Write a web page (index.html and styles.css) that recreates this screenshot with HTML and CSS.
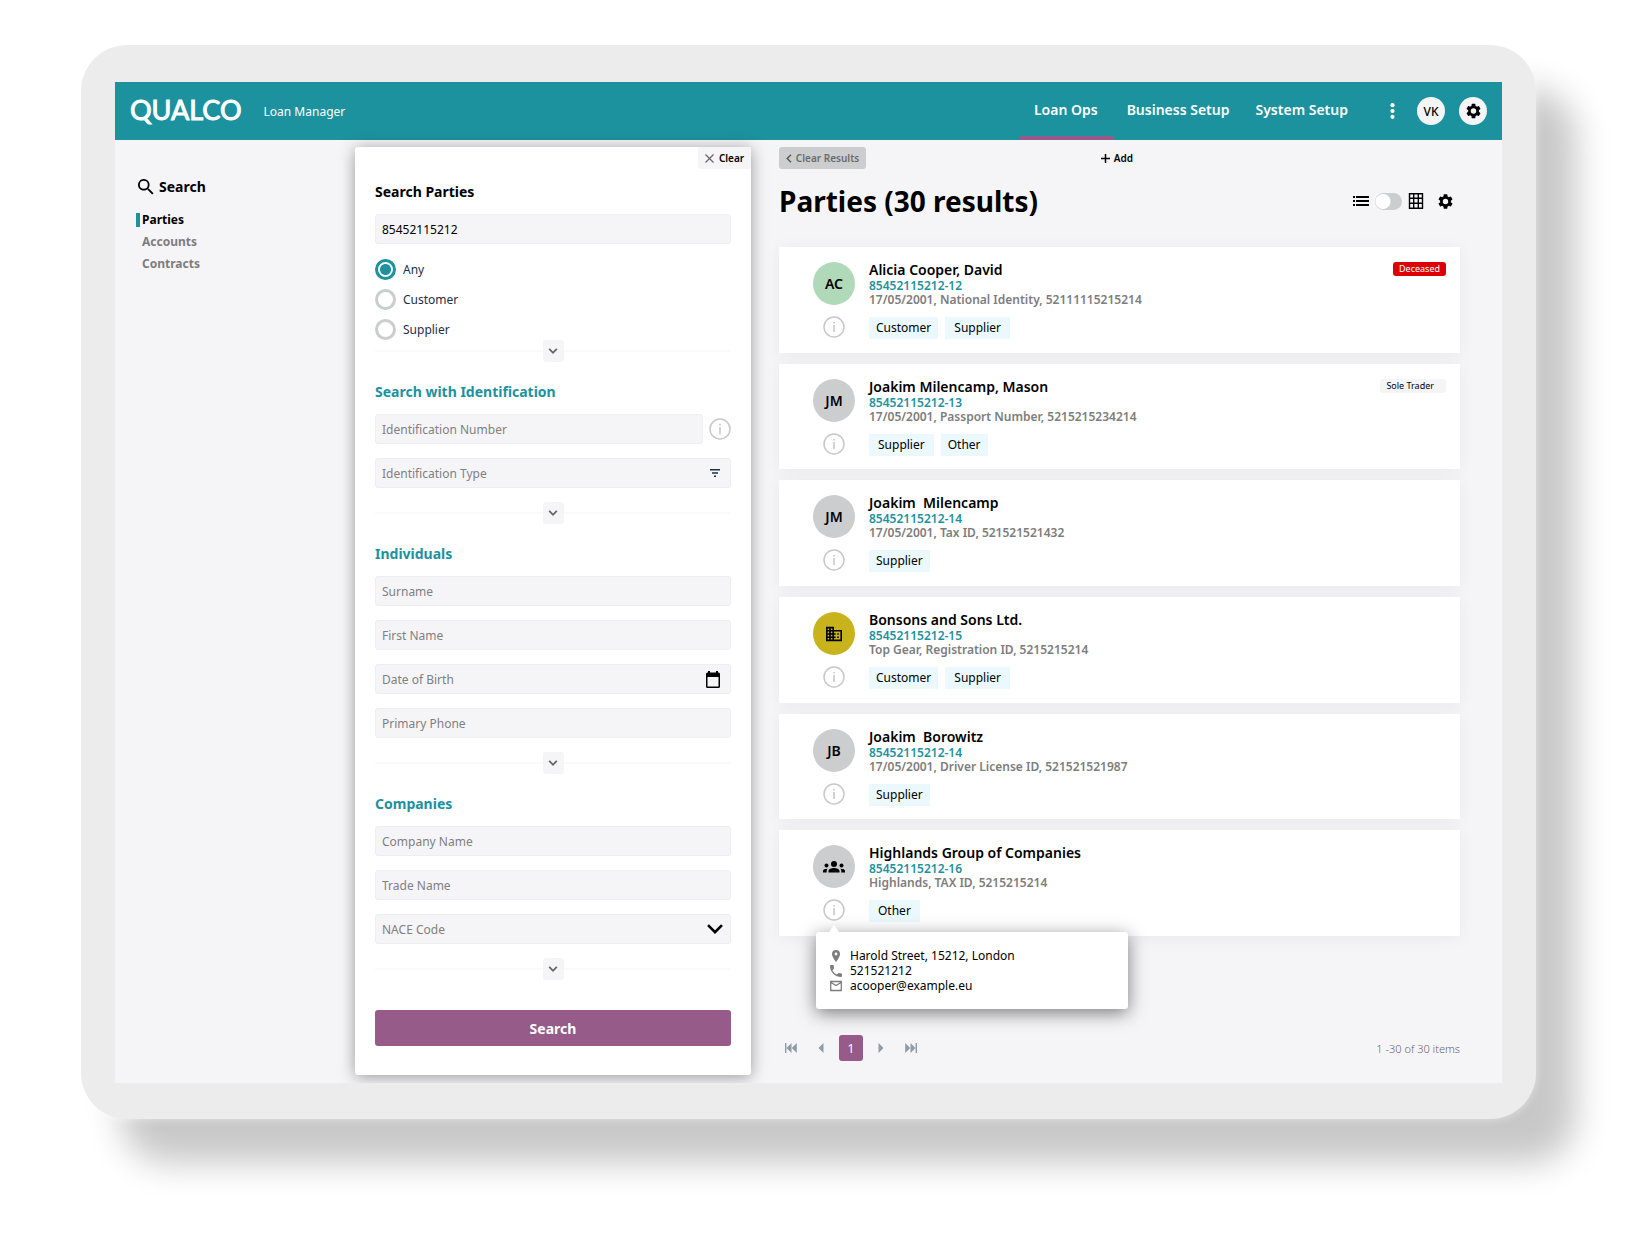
FILE: index.html
```html
<!DOCTYPE html>
<html lang="en">
  <head>
    <meta charset="UTF-8" />
    <meta name="viewport" content="width=device-width, initial-scale=1.0" />
    <title>Loan Manager - Parties</title>
    <link rel="stylesheet" href="styles.css">
  </head>
  <body>
    <!-- shared icons -->
    <svg class="sprite" aria-hidden="true">
      <symbol id="i-gear" viewBox="2 2 20 20"><path d="M19.14 12.94c.04-.3.06-.61.06-.94s-.02-.64-.07-.94l2.03-1.58a.49.49 0 0 0 .12-.61l-1.92-3.32a.49.49 0 0 0-.59-.22l-2.39.96a7 7 0 0 0-1.62-.94l-.36-2.54a.48.48 0 0 0-.48-.41h-3.84a.48.48 0 0 0-.47.41l-.36 2.54c-.59.24-1.13.57-1.62.94l-2.39-.96a.48.48 0 0 0-.59.22L2.74 8.87a.48.48 0 0 0 .12.61l2.03 1.58c-.05.3-.09.63-.09.94s.02.64.07.94l-2.03 1.58a.49.49 0 0 0-.12.61l1.92 3.32c.12.22.37.29.59.22l2.39-.96c.5.38 1.03.7 1.62.94l.36 2.54c.05.24.24.41.48.41h3.84c.24 0 .44-.17.47-.41l.36-2.54a7 7 0 0 0 1.62-.94l2.39.96c.22.08.47 0 .59-.22l1.92-3.32a.48.48 0 0 0-.12-.61zM12 15.6a3.6 3.6 0 1 1 0-7.2 3.6 3.6 0 0 1 0 7.2z"/></symbol>
      <symbol id="i-info" viewBox="0 0 22 22"><circle cx="11" cy="11" r="10" fill="none" stroke="currentColor" stroke-width="1.5"/><path d="M10.2 9h1.6v7h-1.6zM10.2 6h1.6v1.6h-1.6z"/></symbol>
      <symbol id="i-down" viewBox="0 0 10 8"><path d="M1.2 1.8 5 5.8l3.8-4" fill="none" stroke="currentColor" stroke-width="1.8"/></symbol>
    </svg>

    <div class="device">
      <div class="screen">
        <header class="topbar">
          <span class="logo">QUALCO</span>
          <span class="product">Loan Manager</span>
          <nav class="main-nav">
            <a href="#" class="active">Loan Ops</a>
            <a href="#">Business Setup</a>
            <a href="#">System Setup</a>
          </nav>
          <div class="top-actions">
            <button class="more" aria-label="More">
              <svg width="5" height="16" viewBox="0 0 5 16"><circle cx="2.500" cy="2.200" r="2.100"/><circle cx="2.500" cy="8" r="2.100"/><circle cx="2.500" cy="13.800" r="2.100"/></svg>
            </button>
            <button class="round">VK</button>
            <button class="round" aria-label="Settings"><svg width="15" height="16"><use href="#i-gear"/></svg></button>
          </div>
        </header>

        <div class="content">
          <aside class="sidebar">
            <h2>
              <svg width="16" height="16" viewBox="3 3 18 18"><path d="M15.500 14h-.79l-.28-.27A6.500 6.500 0 1 0 13.730 14.430l.27.28v.79l5 4.990L20.490 19l-4.990-5zm-6 0a4.500 4.500 0 1 1 0-9 4.500 4.500 0 0 1 0 9z"/></svg>
              Search
            </h2>
            <ul>
              <li><a href="#" class="active">Parties</a></li>
              <li><a href="#">Accounts</a></li>
              <li><a href="#">Contracts</a></li>
            </ul>
          </aside>

          <form class="panel">
            <button type="reset" class="clear">
              <svg width="9" height="9" viewBox="0 0 9 9"><path d="M.5.5l8 8M8.500.5l-8 8" fill="none" stroke="#666" stroke-width="1.200"/></svg>
              Clear
            </button>

            <section>
              <h3 class="dark"><label for="party">Search Parties</label></h3>
              <div class="fields"><input id="party" class="field" type="text" value="85452115212" /></div>
              <div class="radios">
                <label><input type="radio" name="role" checked /> Any</label>
                <label><input type="radio" name="role" /> Customer</label>
                <label><input type="radio" name="role" /> Supplier</label>
              </div>
              <div class="divider flush"><button type="button" aria-label="Expand"><svg width="10" height="8"><use href="#i-down"/></svg></button></div>
            </section>

            <section>
              <h3>Search with Identification</h3>
              <div class="fields">
                <div class="with-info">
                  <input class="field" type="text" placeholder="Identification Number" aria-label="Identification Number" />
                  <svg class="info" width="22" height="22"><use href="#i-info"/></svg>
                </div>
                <div class="with-icon">
                  <select class="field" aria-label="Identification Type"><option>Identification Type</option></select>
                  <svg width="10" height="8" viewBox="0 0 10 8"><path d="M0 0h10v1.500H0zM2 3.200h6v1.500H2zM4 6.400h2v1.500H4z" fill="#1b3048"/></svg>
                </div>
              </div>
              <div class="divider"><button type="button" aria-label="Expand"><svg width="10" height="8"><use href="#i-down"/></svg></button></div>
            </section>

            <section>
              <h3>Individuals</h3>
              <div class="fields">
                <input class="field" type="text" placeholder="Surname" aria-label="Surname" />
                <input class="field" type="text" placeholder="First Name" aria-label="First Name" />
                <div class="with-icon">
                  <input class="field" type="text" placeholder="Date of Birth" aria-label="Date of Birth" />
                  <svg width="14" height="17" viewBox="0 0 14 17"><path d="M2 0h2v1.500h6V0h2v1.500h.5A1.500 1.500 0 0 1 14 3v12.500a1.500 1.500 0 0 1-1.500 1.500h-11A1.500 1.500 0 0 1 0 15.500V3a1.500 1.500 0 0 1 1.500-1.500H2zM1.500 6v9.500h11V6z"/></svg>
                </div>
                <input class="field" type="text" placeholder="Primary Phone" aria-label="Primary Phone" />
              </div>
              <div class="divider"><button type="button" aria-label="Expand"><svg width="10" height="8"><use href="#i-down"/></svg></button></div>
            </section>

            <section>
              <h3>Companies</h3>
              <div class="fields">
                <input class="field" type="text" placeholder="Company Name" aria-label="Company Name" />
                <input class="field" type="text" placeholder="Trade Name" aria-label="Trade Name" />
                <div class="with-icon chevron">
                  <select class="field" aria-label="NACE Code"><option>NACE Code</option></select>
                  <svg width="16" height="10" viewBox="0 0 16 10"><path d="M1 1.200l7 7 7-7" fill="none" stroke="#000" stroke-width="2.600"/></svg>
                </div>
              </div>
              <div class="divider"><button type="button" aria-label="Expand"><svg width="10" height="8"><use href="#i-down"/></svg></button></div>
            </section>

            <button type="button" class="submit">Search</button>
          </form>

          <main class="results">
            <div class="toolbar">
              <button class="clear-results">
                <svg width="6" height="9" viewBox="0 0 6 9"><path d="M5 .8L1.200 4.500 5 8.200" fill="none" stroke="#555" stroke-width="1.400"/></svg>
                Clear Results
              </button>
              <button class="add">
                <svg width="9" height="9" viewBox="0 0 9 9"><path d="M4.500 0v9M0 4.500h9" fill="none" stroke="#000" stroke-width="1.500"/></svg>
                Add
              </button>
            </div>

            <div class="heading">
              <h1>Parties (30 results)</h1>
              <div class="view">
                <svg width="16" height="10" viewBox="0 0 16 10"><path d="M0 0h2v2H0zM0 4h2v2H0zM0 8h2v2H0zM3 0h13v2H3zM3 4h13v2H3zM3 8h13v2H3z"/></svg>
                <input type="checkbox" class="switch" aria-label="Grid view" />
                <svg width="16" height="16" viewBox="0 0 16 16"><path d="M1.500.8h13v14.400h-13zM1 5.300h14M1 10.300h14M5.700 1v14M10.300 1v14" fill="none" stroke="#000" stroke-width="1.400"/></svg>
                <button aria-label="List settings"><svg width="15" height="15"><use href="#i-gear"/></svg></button>
              </div>
            </div>

            <div class="cards">
              <article class="card">
                <div class="side">
                  <div class="avatar green">AC</div>
                  <svg class="info" width="22" height="22"><use href="#i-info"/></svg>
                </div>
                <div class="details">
                  <h4>Alicia Cooper, David</h4>
                  <a href="#">85452115212-12</a>
                  <p>17/05/2001, National Identity, 52111115215214</p>
                  <div class="chips"><span>Customer</span><span class="wide">Supplier</span></div>
                </div>
                <span class="badge red">Deceased</span>
              </article>

              <article class="card">
                <div class="side">
                  <div class="avatar">JM</div>
                  <svg class="info" width="22" height="22"><use href="#i-info"/></svg>
                </div>
                <div class="details">
                  <h4>Joakim Milencamp, Mason</h4>
                  <a href="#">85452115212-13</a>
                  <p>17/05/2001, Passport Number, 5215215234214</p>
                  <div class="chips"><span class="wide">Supplier</span><span>Other</span></div>
                </div>
                <span class="badge">Sole Trader</span>
              </article>

              <article class="card">
                <div class="side">
                  <div class="avatar">JM</div>
                  <svg class="info" width="22" height="22"><use href="#i-info"/></svg>
                </div>
                <div class="details">
                  <h4>Joakim&nbsp; Milencamp</h4>
                  <a href="#">85452115212-14</a>
                  <p>17/05/2001, Tax ID, 521521521432</p>
                  <div class="chips"><span>Supplier</span></div>
                </div>
              </article>

              <article class="card">
                <div class="side">
                  <div class="avatar gold">
                    <svg width="16" height="16" viewBox="2 3 20 18"><path d="M12 7V3H2v18h20V7zM6 19H4v-2h2zm0-4H4v-2h2zm0-4H4V9h2zm0-4H4V5h2zm4 12H8v-2h2zm0-4H8v-2h2zm0-4H8V9h2zm0-4H8V5h2zm10 12h-8v-2h2v-2h-2v-2h2v-2h-2V9h8zm-2-8h-2v2h2zm0 4h-2v2h2z"/></svg>
                  </div>
                  <svg class="info" width="22" height="22"><use href="#i-info"/></svg>
                </div>
                <div class="details">
                  <h4>Bonsons and Sons Ltd.</h4>
                  <a href="#">85452115212-15</a>
                  <p>Top Gear, Registration ID, 5215215214</p>
                  <div class="chips"><span>Customer</span><span class="wide">Supplier</span></div>
                </div>
              </article>

              <article class="card">
                <div class="side">
                  <div class="avatar">JB</div>
                  <svg class="info" width="22" height="22"><use href="#i-info"/></svg>
                </div>
                <div class="details">
                  <h4>Joakim&nbsp; Borowitz</h4>
                  <a href="#">85452115212-14</a>
                  <p>17/05/2001, Driver License ID, 521521521987</p>
                  <div class="chips"><span>Supplier</span></div>
                </div>
              </article>

              <article class="card">
                <div class="side">
                  <div class="avatar">
                    <svg width="22" height="12" viewBox="0 0 22 12"><circle cx="11" cy="3" r="3"/><circle cx="3.500" cy="4.500" r="2"/><circle cx="18.500" cy="4.500" r="2"/><path d="M5.500 11.500V10c0-2 3-3 5.500-3s5.500 1 5.500 3v1.500zM0 11.500V10c0-1.400 1.600-2.300 4.600-2.300-.7.700-.9 1.400-.9 2.300v1.500zM22 11.500V10c0-1.400-1.600-2.300-4.600-2.300.7.700.9 1.400.9 2.300v1.500z"/></svg>
                  </div>
                  <svg class="info" width="22" height="22"><use href="#i-info"/></svg>
                </div>
                <div class="details">
                  <h4>Highlands Group of Companies</h4>
                  <a href="#">85452115212-16</a>
                  <p>Highlands, TAX ID, 5215215214</p>
                  <div class="chips"><span class="wide">Other</span></div>
                </div>
                <div class="popover">
                  <p>
                    <svg width="12" height="12" viewBox="0 0 12 12"><path d="M6 0a4 4 0 0 0-4 4c0 3 4 8 4 8s4-5 4-8a4 4 0 0 0-4-4zm0 5.400a1.400 1.400 0 1 1 0-2.800 1.400 1.400 0 0 1 0 2.800z"/></svg>
                    Harold Street, 15212, London
                  </p>
                  <p>
                    <svg width="12" height="12" viewBox="3 3 18 18"><path d="M6.600 10.800a15.100 15.100 0 0 0 6.600 6.600l2.200-2.200c.3-.3.700-.4 1-.2 1.100.4 2.300.6 3.600.6.600 0 1 .4 1 1V20c0 .6-.4 1-1 1A17 17 0 0 1 3 4c0-.6.4-1 1-1h3.500c.6 0 1 .4 1 1 0 1.300.2 2.400.6 3.600.1.300 0 .7-.2 1z"/></svg>
                    521521212
                  </p>
                  <p>
                    <svg width="12" height="12" viewBox="0 0 12 12"><path d="M.7 1.500h10.600v9H.7zM1 2.500l5 3 5-3" fill="none" stroke="currentColor" stroke-width="1.300"/></svg>
                    acooper@example.eu
                  </p>
                </div>
              </article>
            </div>

            <footer class="pager">
              <button aria-label="First page"><svg width="12" height="10" viewBox="0 0 12 10"><path d="M0 0h1.400v10H0zM6.500 0v10l-5-5zM11.800 0v10l-5-5z"/></svg></button>
              <button aria-label="Previous page"><svg width="6" height="10" viewBox="0 0 6 10"><path d="M5.500 0v10l-5-5z"/></svg></button>
              <button class="current">1</button>
              <button aria-label="Next page"><svg width="6" height="10" viewBox="0 0 6 10"><path d="M.5 0v10l5-5z"/></svg></button>
              <button aria-label="Last page"><svg width="12" height="10" viewBox="0 0 12 10"><path d="M10.600 0H12v10h-1.400zM.2 0v10l5-5zM5.500 0v10l5-5z"/></svg></button>
              <span class="count">1 -30 of 30 items</span>
            </footer>
          </main>
        </div>
      </div>
    </div>
  </body>
</html>
```

FILE: styles.css
```css
:root {
  --teal: #1c929e;
  --purple: #965b89;
  --surface: #f5f5f8;
  --grey: #cccdcf;
  --muted: #7d7d7d;
}
* {
  box-sizing: border-box;
}
body {
  margin: 0;
  padding: 45px 109px 100px 81px;
  background: #fff;
  color: #000;
  font-family: "Noto Sans", sans-serif;
  font-size: 12px;
}
h1,
h2,
h3,
h4,
p,
ul {
  margin: 0;
  padding: 0;
}
a {
  text-decoration: none;
}
button {
  display: flex;
  align-items: center;
  justify-content: center;
  border: none;
  padding: 0;
  background: none;
  color: #000;
  font-family: inherit;
  cursor: pointer;
}
svg {
  flex: none;
  fill: currentColor;
}
.sprite {
  position: absolute;
  width: 0;
  height: 0;
}

/* device frame */
.device {
  padding: 37px 34px 36px;
  background: #ececec;
  border-radius: 46px;
  box-shadow: 0 0 10px rgba(255, 255, 255, 0.5), 40px 44px 34px rgba(0, 0, 0, 0.22);
}
.screen {
  background: var(--surface);
  overflow: hidden;
}

/* top bar */
.topbar {
  display: flex;
  align-items: center;
  height: 58px;
  padding: 0 15px;
  background: var(--teal);
  color: #fff;
}
.logo {
  font-family: Lato, sans-serif;
  font-size: 27px;
  line-height: 32px;
  padding-bottom: 2px;
  -webkit-text-stroke: 1px #fff;
}
.product {
  margin-left: 22px;
}
.main-nav {
  display: flex;
  align-self: stretch;
  margin-left: auto;
}
.main-nav a {
  display: flex;
  align-items: center;
  padding: 0 13px;
  border-bottom: 4px solid transparent;
  color: #fff;
  font-size: 14px;
  font-weight: 600;
}
.main-nav a.active {
  padding: 0 16px 0 14px;
  border-color: var(--purple);
}
.top-actions {
  display: flex;
  align-items: center;
  gap: 14px;
  margin-left: 26px;
}
.more {
  width: 10px;
  height: 28px;
  margin-right: 6px;
  color: #fff;
}
.round {
  width: 28px;
  height: 28px;
  border-radius: 50%;
  background: var(--surface);
  font-size: 12px;
  font-weight: 500;
}

.content {
  display: grid;
  grid-template-columns: 240px minmax(320px, 396px) 1fr;
  padding: 7px 0 8px;
}

/* sidebar */
.sidebar {
  padding: 30px 21px;
}
.sidebar h2 {
  display: flex;
  align-items: center;
  gap: 5px;
  padding-left: 2px;
  font-size: 14px;
  line-height: 20px;
  font-weight: 700;
  margin-bottom: 12px;
}
.sidebar ul {
  list-style: none;
}
.sidebar li {
  height: 22px;
  display: flex;
  align-items: center;
}
.sidebar a {
  padding-left: 2px;
  border-left: 4px solid transparent;
  color: var(--muted);
  font-size: 12px;
  line-height: 14px;
  font-weight: 700;
}
.sidebar a.active {
  border-color: var(--teal);
  color: #000;
}

/* search panel */
.panel {
  padding: 0 20px 29px;
  background: #fff;
  border-radius: 3px;
  box-shadow: 0 2px 16px rgba(0, 0, 0, 0.38);
}
.clear {
  gap: 5px;
  width: 53px;
  height: 22px;
  margin: 0 -20px 12px auto;
  background: var(--surface);
  border-radius: 3px;
  font-size: 10px;
  font-weight: 600;
}
.panel section {
  margin-bottom: 19px;
}
.panel h3 {
  margin-bottom: 11px;
  color: var(--teal);
  font-size: 14px;
  line-height: 22px;
  font-weight: 700;
}
.panel h3.dark {
  color: #000;
}
.fields {
  display: flex;
  flex-direction: column;
  gap: 14px;
}
.field {
  width: 100%;
  height: 30px;
  padding: 0 6px;
  border: 1px solid #eeeef0;
  border-radius: 3px;
  background: var(--surface);
  color: #000;
  font-family: inherit;
  font-size: 12px;
  appearance: none;
}
.field::placeholder,
select.field {
  color: #808080;
  opacity: 1;
}
.with-info {
  display: flex;
  align-items: center;
  gap: 6px;
}
.info {
  color: #c8c8c8;
}
.with-icon {
  display: grid;
  align-items: center;
}
.with-icon > * {
  grid-area: 1 / 1;
}
.with-icon svg {
  justify-self: end;
  margin-right: 11px;
  pointer-events: none;
}
.with-icon.chevron svg {
  margin-right: 8px;
}
.radios {
  display: flex;
  flex-direction: column;
  gap: 8px;
  margin-top: 14px;
}
.radios label {
  display: flex;
  align-items: center;
  gap: 7px;
  height: 22px;
  color: #1b3048;
}
.radios input {
  appearance: none;
  width: 21px;
  height: 21px;
  margin: 0;
  border: 3px solid var(--grey);
  border-radius: 50%;
}
.radios input:checked {
  border-color: var(--teal);
  background: radial-gradient(circle, var(--teal) 5px, transparent 6px);
}
.divider {
  display: flex;
  align-items: center;
  margin-top: 14px;
}
.divider.flush {
  margin-top: 0;
}
.divider::before,
.divider::after {
  content: "";
  flex: 1;
  height: 2px;
  background: #fafafa;
}
.divider button {
  width: 21px;
  height: 22px;
  background: var(--surface);
  border-radius: 3px;
  color: #666;
}
.submit {
  width: 100%;
  height: 36px;
  margin-top: 30px;
  background: var(--purple);
  border-radius: 3px;
  color: #fff;
  font-size: 14px;
  font-weight: 700;
}

/* results */
.results {
  display: flex;
  flex-direction: column;
  padding: 0 42px 14px 28px;
}
.toolbar {
  display: flex;
  justify-content: space-between;
  width: 52%;
}
.toolbar button {
  gap: 4px;
  height: 22px;
  font-size: 10px;
  font-weight: 600;
}
.toolbar .clear-results {
  width: 87px;
  background: var(--grey);
  border-radius: 3px;
  color: #6b6b6b;
}
.heading {
  display: flex;
  align-items: center;
  justify-content: space-between;
  height: 42px;
  margin: 11px 0 25px;
}
.heading h1 {
  font-size: 28px;
  font-weight: 700;
}
.view {
  display: flex;
  align-items: center;
  gap: 6px;
  padding-right: 7px;
}
.view button {
  margin-left: 8px;
}
.switch {
  appearance: none;
  width: 27px;
  height: 17px;
  margin: 0;
  border-radius: 9px;
  background: radial-gradient(circle at 8px 50%, #fff 7px, var(--grey) 8px);
}
.cards {
  display: flex;
  flex-direction: column;
  flex: 1;
  gap: 11px;
}
.card {
  position: relative;
  display: flex;
  flex: 1;
  align-items: flex-start;
  gap: 14px;
  padding: 15px 14px 0 34px;
  background: #fff;
  box-shadow: 0 2px 16px rgba(0, 0, 0, 0.05);
}
.side {
  display: flex;
  flex-direction: column;
  align-items: center;
  gap: 11px;
}
.avatar {
  display: flex;
  align-items: center;
  justify-content: center;
  width: 42px;
  height: 43px;
  border-radius: 50%;
  background: var(--grey);
  font-size: 14px;
  font-weight: 600;
}
.avatar.green {
  background: #afd9b8;
}
.avatar.gold {
  background: #c8b31c;
}
.details {
  flex: 1;
}
.details h4 {
  font-size: 14px;
  line-height: 16px;
  font-weight: 600;
}
.details a {
  display: block;
  color: var(--teal);
  font-size: 12px;
  line-height: 15px;
  font-weight: 600;
}
.details p {
  color: var(--muted);
  font-size: 12px;
  line-height: 14px;
  font-weight: 600;
}
.chips {
  display: flex;
  gap: 7px;
  margin-top: 10px;
}
.chips span {
  padding: 0 7px;
  background: #ebf9ff;
  line-height: 22px;
}
.chips .wide {
  padding: 0 9px;
}
.badge {
  padding: 0 12px 0 6px;
  border-radius: 3px;
  background: var(--surface);
  font-size: 9px;
  line-height: 14px;
}
.badge.red {
  padding: 0 6px;
  background: #dd0004;
  color: #fff;
}
.popover {
  position: absolute;
  top: 102px;
  left: 37px;
  width: 312px;
  padding: 16px 14px;
  background: #fff;
  border-radius: 3px;
  box-shadow: 0 4px 18px rgba(0, 0, 0, 0.5);
}
.popover::before {
  content: "";
  position: absolute;
  top: -7px;
  left: 13px;
  border: 5px solid transparent;
  border-top: none;
  border-bottom: 7px solid #fff;
}
.popover p {
  display: flex;
  align-items: center;
  gap: 8px;
  line-height: 15px;
}
.popover svg {
  color: var(--muted);
}

.pager {
  display: flex;
  align-items: center;
  gap: 6px;
  margin-top: 99px;
  color: #8f9ca6;
}
.pager button {
  width: 24px;
  height: 26px;
  color: inherit;
}
.pager .current {
  background: var(--purple);
  border-radius: 3px;
  color: #fff;
  font-size: 12px;
}
.count {
  margin-left: auto;
  color: #666;
  font-size: 11px;
  font-weight: 300;
}
```
